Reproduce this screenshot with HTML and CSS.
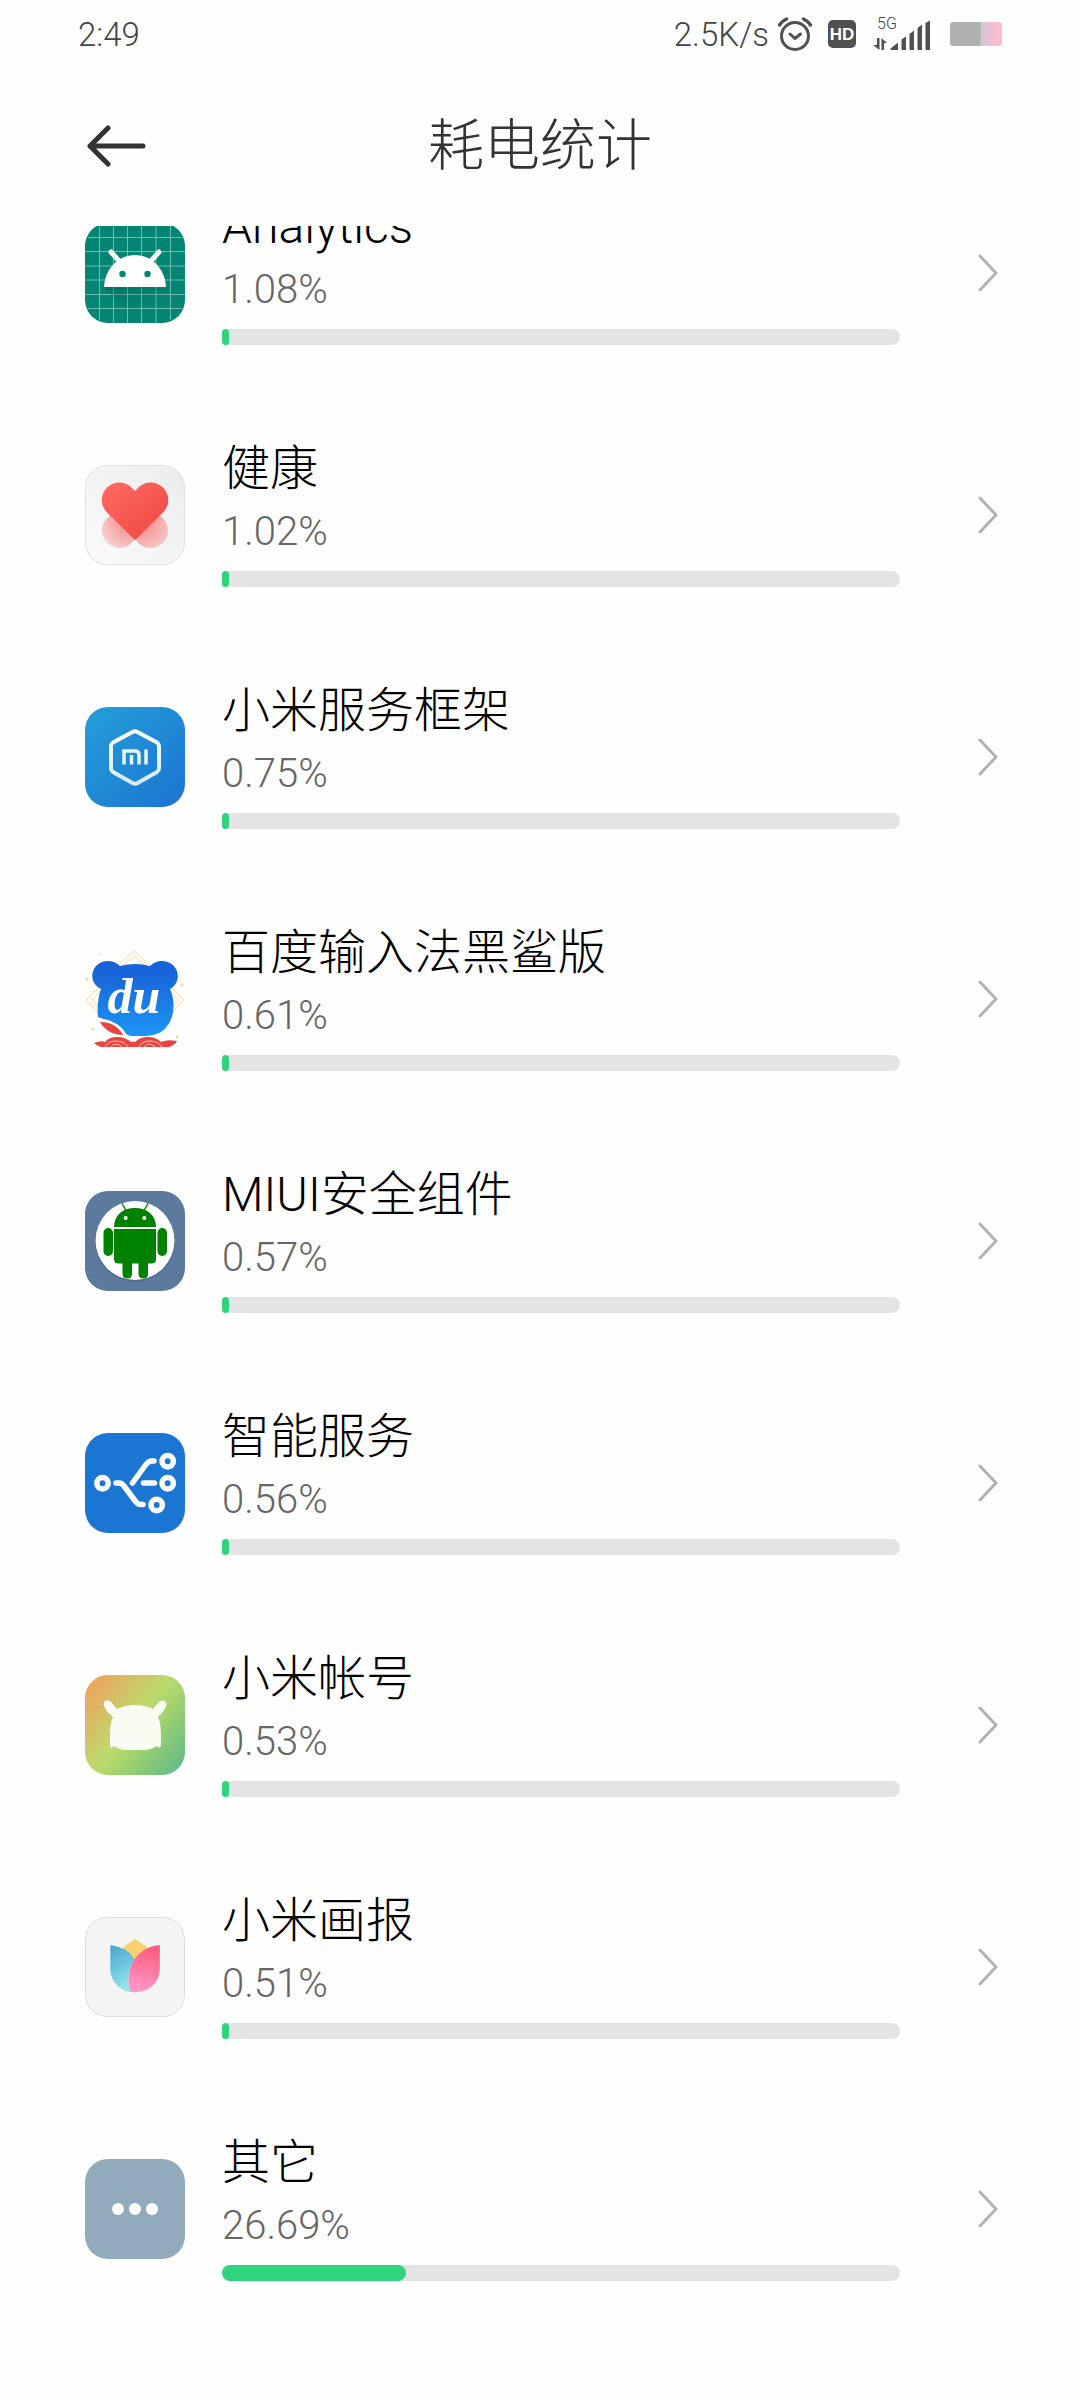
FILE: index.html
```html
<!DOCTYPE html>
<html lang="zh-CN">

<head>
    <meta charset="utf-8">
    <meta name="viewport" content="width=device-width">
    <title>耗电统计</title>
    <link rel="stylesheet" href="styles.css">
</head>

<body>
    <div class="status-bar">
        <span class="status-time">2:49</span>
        <div class="status-right">
            <span class="status-speed">2.5K/s</span>
            <svg class="status-alarm" width="36" height="36" viewBox="0 0 36 36" fill="none" stroke="#505050" stroke-linecap="round" stroke-linejoin="round">
                <circle cx="18" cy="20" r="13.500" stroke-width="3"/>
                <path d="M13 18l5 4.500 5.500-4.500" stroke-width="3"/>
                <path d="M2.500 9Q5 5 9.500 3M33.500 9Q31 5 26.500 3" stroke-width="3.500"/>
            </svg>
            <span class="status-hd">HD</span>
            <div class="status-signal">
                <span class="signal-type">5G</span>
                <svg width="58" height="32" viewBox="0 0 58 32" fill="#505050">
                    <path d="M4 20h2.500v12L0 27h4zM8.500 32V20l5.500 5h-3v7z"/>
                    <path d="M17 31l8-6.500V32h-7zM28.500 21.500l4.500-3V32h-4.500zM36.500 16l4.500-3.500V32h-4.500zM44.500 10l4.500-3.500V32h-4.500zM52.500 5L57 2.500V32h-4.500z"/>
                </svg>
            </div>
            <span class="status-battery"></span>
        </div>
    </div>

    <div class="header">
        <button class="back-btn" type="button" aria-label="返回">
            <svg width="60" height="42" viewBox="0 0 60 42" fill="none" stroke="#333" stroke-width="5" stroke-linecap="round" stroke-linejoin="round">
                <path d="M22 3L4 21l18 18M4 21h53"/>
            </svg>
        </button>
        <h1 class="header-title">耗电统计</h1>
    </div>

    <div class="list-wrap">
        <ul class="app-list">
            <li>
                <a class="app-item" href="#analytics">
                    <svg class="app-icon" viewBox="0 0 100 100">
                        <defs>
                            <linearGradient id="shadow" x1="0" y1="0" x2="0.700" y2="1">
                                <stop offset="0" stop-color="#004d40" stop-opacity="0.350"/>
                                <stop offset="0.600" stop-color="#004d40" stop-opacity="0"/>
                            </linearGradient>
                        </defs>
                        <rect width="100" height="100" rx="23" fill="#048574"/>
                        <path d="M14.500 3v94M28.500 0v100M42.500 0v100M56.500 0v100M71 0v100M85.500 3v94M3 14.500h94M0 28.500h100M0 43h100M0 57h100M0 71.500h100M3 85.500h94" stroke="#6dbcaf" stroke-width="1"/>
                        <path d="M19 64h62l19 19-17 17H55z" fill="url(#shadow)"/>
                        <path d="M19 64C20 46 33 32 50 32s30 14 31 32z" fill="#fff"/>
                        <path d="M26 29l9 10M74 29l-9 10" stroke="#fff" stroke-width="5" stroke-linecap="round"/>
                        <circle cx="37.500" cy="51" r="3.200" fill="#048574"/>
                        <circle cx="62.500" cy="51" r="3.200" fill="#048574"/>
                    </svg>
                    <div class="app-info">
                        <div class="app-name">Analytics</div>
                        <div class="app-percent">1.08%</div>
                        <div class="app-bar"><div class="app-bar-in" style="width: 1.08%"></div></div>
                    </div>
                    <svg class="app-arrow" viewBox="0 0 20 38"><path d="M2 2l16 17L2 36"/></svg>
                </a>
            </li>
            <li>
                <a class="app-item" href="#health">
                    <svg class="app-icon" viewBox="0 0 100 100">
                        <defs>
                            <linearGradient id="healthBg" x1="1" y1="0" x2="0" y2="1">
                                <stop offset="0" stop-color="#ececec"/>
                                <stop offset="1" stop-color="#fbfbfb"/>
                            </linearGradient>
                            <linearGradient id="heart" x1="0" y1="0" x2="1" y2="1">
                                <stop offset="0" stop-color="#ff6b64"/>
                                <stop offset="1" stop-color="#ee4540"/>
                            </linearGradient>
                            <radialGradient id="petalL" cx="0.800" cy="0.200" r="0.900">
                                <stop offset="0" stop-color="#f3817e"/>
                                <stop offset="1" stop-color="#f8cfcf"/>
                            </radialGradient>
                            <radialGradient id="petalR" cx="0.200" cy="0.200" r="0.900">
                                <stop offset="0" stop-color="#f3817e"/>
                                <stop offset="1" stop-color="#f6c4c4"/>
                            </radialGradient>
                        </defs>
                        <rect x="0.500" y="0.500" width="99" height="99" rx="22" fill="url(#healthBg)" stroke="#dfe2dc"/>
                        <circle cx="34.500" cy="65.500" r="17.500" fill="url(#petalL)"/>
                        <circle cx="65.500" cy="65.500" r="17.500" fill="url(#petalR)"/>
                        <path d="M50 75L22 47.500A17.500 17.500 0 0 1 46.500 22.500L50 26l3.500-3.500A17.500 17.500 0 0 1 78 47.500z" fill="url(#heart)"/>
                    </svg>
                    <div class="app-info">
                        <div class="app-name">健康</div>
                        <div class="app-percent">1.02%</div>
                        <div class="app-bar"><div class="app-bar-in" style="width: 1.02%"></div></div>
                    </div>
                    <svg class="app-arrow" viewBox="0 0 20 38"><path d="M2 2l16 17L2 36"/></svg>
                </a>
            </li>
            <li>
                <a class="app-item" href="#framework">
                    <svg class="app-icon" viewBox="0 0 100 100">
                        <defs>
                            <linearGradient id="miBg" x1="0" y1="0" x2="1" y2="1">
                                <stop offset="0" stop-color="#249fd8"/>
                                <stop offset="1" stop-color="#1b74d2"/>
                            </linearGradient>
                            <linearGradient id="miLine" x1="0" y1="0" x2="0" y2="1">
                                <stop offset="0" stop-color="#fff"/>
                                <stop offset="1" stop-color="#d2e9fa"/>
                            </linearGradient>
                        </defs>
                        <rect width="100" height="100" rx="23" fill="url(#miBg)"/>
                        <path d="M47.500 25Q50 23.500 52.500 25L72 35.500Q74 37 74 39v22.500Q74 63.500 72 65L52.500 76Q50 77.500 47.500 76L28 65Q26 63.500 26 61.500V39Q26 37 28 35.500z" fill="none" stroke="url(#miLine)" stroke-width="4"/>
                        <path d="M39 57.500V44h11q4 0 4 4v9.500M46.500 48v9.500M61 42.500v15" fill="none" stroke="#e6f4fd" stroke-width="3.500"/>
                    </svg>
                    <div class="app-info">
                        <div class="app-name">小米服务框架</div>
                        <div class="app-percent">0.75%</div>
                        <div class="app-bar"><div class="app-bar-in" style="width: 0.75%"></div></div>
                    </div>
                    <svg class="app-arrow" viewBox="0 0 20 38"><path d="M2 2l16 17L2 36"/></svg>
                </a>
            </li>
            <li>
                <a class="app-item" href="#input">
                    <svg class="app-icon" viewBox="0 0 100 100">
                        <defs>
                            <linearGradient id="bear" x1="0" y1="0" x2="0" y2="1">
                                <stop offset="0.150" stop-color="#1963d8"/>
                                <stop offset="1" stop-color="#1c96f5"/>
                            </linearGradient>
                        </defs>
                        <g fill="none" stroke="#fbe6bd" stroke-width="1.500">
                            <path d="M32 17L49 2l17 15M36 18L49 7l13 11"/>
                            <path d="M15 37L1 51l16 17M15 43l-8 8 9 10"/>
                            <path d="M85 37l14 14-16 17M85 43l8 8-9 10"/>
                        </g>
                        <g fill="#f9d58d">
                            <circle cx="2" cy="30" r="1.500"/>
                            <circle cx="97" cy="36" r="1.500"/>
                            <circle cx="8" cy="80" r="1.500"/>
                            <circle cx="92" cy="88" r="1.500"/>
                            <circle cx="15" cy="5" r="1"/>
                        </g>
                        <path d="M35 17Q50 13 65 17C73 9 86 11 91 20c4 8 1 16-6 20 6 13 4 29-3 37-5 8-15 10-24 10H47C39 87 32 75 13 68 12 59 13 48 16 40 8 36 5 28 9 20 14 11 27 9 35 17z" fill="url(#bear)"/>
                        <text class="du-text" x="49" y="64" text-anchor="middle">du</text>
                        <path d="M13 69C28 71 37 76 42 87H31C25 82 17 79 13 69z" fill="#fff"/>
                        <path d="M15 73C26 73 33 77 38 86 29 86 20 82 15 73z" fill="#e94444"/>
                        <path d="M9 94q7-3 11-1 4-5 12-5t14 5q2-1 4 0 5-5 13-5t13 5q6-3 16-1-2 4-8 6H16q-5-2-7-4z" fill="#e94444"/>
                        <path d="M20 98q3-6 11-6t12 6M26 98q2-3 5-3t6 3M54 98q3-6 11-6t12 6M59 98q2-3 5-3t6 3" fill="none" stroke="#fac7a0" stroke-width="1"/>
                    </svg>
                    <div class="app-info">
                        <div class="app-name">百度输入法黑鲨版</div>
                        <div class="app-percent">0.61%</div>
                        <div class="app-bar"><div class="app-bar-in" style="width: 0.61%"></div></div>
                    </div>
                    <svg class="app-arrow" viewBox="0 0 20 38"><path d="M2 2l16 17L2 36"/></svg>
                </a>
            </li>
            <li>
                <a class="app-item" href="#security">
                    <svg class="app-icon" viewBox="0 0 100 100">
                        <rect width="100" height="100" rx="23" fill="#5c7a9e"/>
                        <circle cx="50" cy="50.500" r="40" fill="#4d6888"/>
                        <circle cx="50" cy="49.500" r="39.500" fill="#fff"/>
                        <g fill="#008200">
                            <path d="M29 36C29 24 38 17 50 17s21 7 21 19z"/>
                            <path d="M29 38h42v30q0 4.500-4.500 4.500h-33Q29 72.500 29 68z"/>
                            <rect x="18.500" y="37" width="9.500" height="28" rx="4.700"/>
                            <rect x="72.500" y="37" width="9.500" height="28" rx="4.700"/>
                            <path d="M37.500 70H47v13q0 4.500-4.700 4.500T37.500 83zM53.500 70H63v13q0 4.500-4.700 4.500T53.500 83z"/>
                        </g>
                        <path d="M37 12.500l4 7M63 12.500l-4 7" stroke="#008200" stroke-width="1.500"/>
                        <circle cx="40.700" cy="27" r="2" fill="#fff"/>
                        <circle cx="59.300" cy="27" r="2" fill="#fff"/>
                    </svg>
                    <div class="app-info">
                        <div class="app-name">MIUI安全组件</div>
                        <div class="app-percent">0.57%</div>
                        <div class="app-bar"><div class="app-bar-in" style="width: 0.57%"></div></div>
                    </div>
                    <svg class="app-arrow" viewBox="0 0 20 38"><path d="M2 2l16 17L2 36"/></svg>
                </a>
            </li>
            <li>
                <a class="app-item" href="#smart">
                    <svg class="app-icon" viewBox="0 0 100 100">
                        <rect width="100" height="100" rx="23" fill="#1b76d3"/>
                        <g fill="none" stroke="#fff" stroke-width="5.500" stroke-linecap="round" stroke-linejoin="round">
                            <circle cx="17.500" cy="50.300" r="5.700"/>
                            <circle cx="82.700" cy="28.300" r="5.700"/>
                            <circle cx="82.700" cy="50.300" r="5.700"/>
                            <circle cx="71.700" cy="72" r="5.700"/>
                            <path d="M31 50h3q3 0 5 3l12 16q2 2.500 5 2.500h2M47.500 50l13-18q3-4 6-4h2.500M58.500 50h11"/>
                        </g>
                    </svg>
                    <div class="app-info">
                        <div class="app-name">智能服务</div>
                        <div class="app-percent">0.56%</div>
                        <div class="app-bar"><div class="app-bar-in" style="width: 0.56%"></div></div>
                    </div>
                    <svg class="app-arrow" viewBox="0 0 20 38"><path d="M2 2l16 17L2 36"/></svg>
                </a>
            </li>
            <li>
                <a class="app-item" href="#account">
                    <svg class="app-icon" viewBox="0 0 100 100">
                        <defs>
                            <linearGradient id="accountBg" x1="0" y1="0.100" x2="1" y2="0.900">
                                <stop offset="0.050" stop-color="#eba75f"/>
                                <stop offset="0.480" stop-color="#badb6d"/>
                                <stop offset="0.600" stop-color="#a8d46e"/>
                                <stop offset="1" stop-color="#60bb85"/>
                            </linearGradient>
                        </defs>
                        <rect width="100" height="100" rx="23" fill="url(#accountBg)"/>
                        <path d="M32 34Q40 30 50 30t18 4l5-6c4-5 10-2 8 3-1 4-5 8-8 11 3 7 3 12 3 28q-1 5-4 1Q66 75 58 75H42Q34 75 29 71q-4 4-4-1c0-16 0-21 3-28-3-3-7-6-9-11-2-6 5-8 8-3z" fill="#f9fcf2"/>
                    </svg>
                    <div class="app-info">
                        <div class="app-name">小米帐号</div>
                        <div class="app-percent">0.53%</div>
                        <div class="app-bar"><div class="app-bar-in" style="width: 0.53%"></div></div>
                    </div>
                    <svg class="app-arrow" viewBox="0 0 20 38"><path d="M2 2l16 17L2 36"/></svg>
                </a>
            </li>
            <li>
                <a class="app-item" href="#gallery">
                    <svg class="app-icon" viewBox="0 0 100 100">
                        <defs>
                            <linearGradient id="leafBlue" x1="0" y1="0" x2="0.300" y2="1">
                                <stop offset="0" stop-color="#4aa3cd"/>
                                <stop offset="1" stop-color="#90e6ea"/>
                            </linearGradient>
                            <linearGradient id="leafPink" x1="0.500" y1="0" x2="0.300" y2="1">
                                <stop offset="0" stop-color="#fd5c7e"/>
                                <stop offset="1" stop-color="#ff99cc"/>
                            </linearGradient>
                        </defs>
                        <rect x="0.500" y="0.500" width="99" height="99" rx="22" fill="#f5f5f5" stroke="#dbdbe6"/>
                        <path d="M37 31Q43 26 50 22q7 4 13 9L50 44z" fill="#fad070"/>
                        <path d="M25.300 28Q42 30 50 42.500C43 52 42 63 45 75 34 73 25.300 64 25.300 52z" fill="url(#leafBlue)"/>
                        <path d="M74.800 28v23.500C74.800 66 63 77 45 75 40 56 47 31 74.800 28z" fill="url(#leafPink)"/>
                    </svg>
                    <div class="app-info">
                        <div class="app-name">小米画报</div>
                        <div class="app-percent">0.51%</div>
                        <div class="app-bar"><div class="app-bar-in" style="width: 0.51%"></div></div>
                    </div>
                    <svg class="app-arrow" viewBox="0 0 20 38"><path d="M2 2l16 17L2 36"/></svg>
                </a>
            </li>
            <li>
                <a class="app-item" href="#other">
                    <svg class="app-icon" viewBox="0 0 100 100">
                        <rect width="100" height="100" rx="23" fill="#92abbc"/>
                        <circle cx="33" cy="50" r="6" fill="#fff"/>
                        <circle cx="50" cy="50" r="6" fill="#fff"/>
                        <circle cx="67" cy="50" r="6" fill="#fff"/>
                    </svg>
                    <div class="app-info">
                        <div class="app-name">其它</div>
                        <div class="app-percent">26.69%</div>
                        <div class="app-bar"><div class="app-bar-in" style="width: 27.2%"></div></div>
                    </div>
                    <svg class="app-arrow" viewBox="0 0 20 38"><path d="M2 2l16 17L2 36"/></svg>
                </a>
            </li>
        </ul>
    </div>
</body>

</html>
```

FILE: styles.css
```css
body{
    margin: 0;
    background-color: #fefefe;
    font-family: Roboto, "Noto Sans CJK SC", sans-serif;
    font-weight: 300;
    color: #000;
}
svg{
    display: block;
}

/* 状态栏 */
.status-bar{
    display: flex;
    justify-content: space-between;
    align-items: center;
    height: 68px;
    padding: 0 78px;
    font-size: 33px;
    color: #444;
}
.status-right{
    display: flex;
    align-items: center;
}
.status-alarm{
    margin-left: 8px;
}
.status-hd{
    width: 28px;
    height: 28px;
    margin-left: 15px;
    border-radius: 5px;
    background-color: #505050;
    color: #fff;
    font: bold 17px/30px "Liberation Sans", sans-serif;
    text-align: center;
}
.status-signal{
    position: relative;
    margin-left: 17px;
}
.signal-type{
    position: absolute;
    top: 0;
    left: 4px;
    font-size: 16px;
    line-height: 12px;
}
.status-battery{
    width: 52px;
    height: 24px;
    margin-left: 19px;
    border-radius: 3px;
    background: linear-gradient(to right, #b0b0b0 58%, #cdc8d8 60%, #f9bdd2 88%);
}

/* 标题栏 */
.header{
    display: grid;
    grid-template-columns: 60px 1fr 60px;
    align-items: center;
    height: 156px;
    padding: 0 86px 2px;
}
.back-btn{
    padding: 0;
    border: none;
    background: none;
    cursor: pointer;
}
.header-title{
    margin: 0;
    font-size: 56px;
    font-weight: 300;
    line-height: 80px;
    text-align: center;
    color: #333;
}

/* 列表 */
.list-wrap{
    overflow: hidden;
}
.app-list{
    list-style: none;
    margin: -74px 0 0 0;
    padding: 0;
}
.app-item{
    display: flex;
    align-items: center;
    padding: 0 82px 0 85px;
    color: #000;
    text-decoration: none;
}
.app-icon{
    flex: none;
    width: 100px;
    height: 100px;
}
.app-info{
    flex: 1;
    padding: 43px 0 49px 0;
    margin: 0 78px 0 37px;
}
.app-name{
    font-size: 48px;
    line-height: 64px;
}
.app-percent{
    margin: 7px 0 15px 0;
    font-size: 40px;
    line-height: 48px;
    color: #666;
}
.app-bar{
    height: 16px;
    border-radius: 8px;
    background-color: #e4e4e4;
}
.app-bar-in{
    min-width: 7px;
    height: 100%;
    border-radius: 8px;
    background-color: #2ed57c;
}
.app-arrow{
    flex: none;
    width: 20px;
    height: 38px;
    fill: none;
    stroke: #b2b2b2;
    stroke-width: 3;
    stroke-linecap: round;
    stroke-linejoin: round;
}
.du-text{
    font: italic bold 50px "Liberation Serif", serif;
    fill: #fff;
}
```
